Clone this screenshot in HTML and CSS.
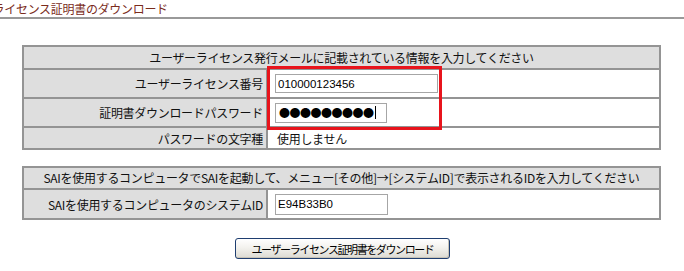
FILE: index.html
```html
<!DOCTYPE html>
<html lang="ja">
<head>
    <meta charset="UTF-8">
    <title>ユーザーライセンス証明書のダウンロード</title>
    <link rel="stylesheet" href="styles.css">
</head>
<body>
    <h1 class="page_ttl">ユーザーライセンス証明書のダウンロード</h1>

    <div class="tbl_wrap">
        <table class="form_tbl">
            <tr>
                <th colspan="2" class="head">ユーザーライセンス発行メールに記載されている情報を入力してください</th>
            </tr>
            <tr class="in_row">
                <td class="lbl">ユーザーライセンス番号</td>
                <td class="val"><input type="text" class="ent wide" value="010000123456"></td>
            </tr>
            <tr class="in_row">
                <td class="lbl">証明書ダウンロードパスワード</td>
                <td class="val">
                    <div class="ent pw"><span class="dots">●●●●●●●●●</span><span class="caret"></span></div>
                </td>
            </tr>
            <tr class="txt_row">
                <td class="lbl">パスワードの文字種</td>
                <td class="val txt">使用しません</td>
            </tr>
        </table>
        <div class="mark"></div>
    </div>

    <table class="form_tbl second">
        <tr>
            <th colspan="2" class="head">SAIを使用するコンピュータでSAIを起動して、メニュー[その他]→[システムID]で表示されるIDを入力してください</th>
        </tr>
        <tr class="in_row tall">
            <td class="lbl">SAIを使用するコンピュータのシステムID</td>
            <td class="val"><input type="text" class="ent short" value="E94B33B0"></td>
        </tr>
    </table>

    <div class="btn_row">
        <button type="button" class="subbtn">ユーザーライセンス証明書をダウンロード</button>
    </div>
</body>
</html>
```

FILE: styles.css
```css
* {
    margin: 0;
    padding: 0;
    box-sizing: border-box;
}

body {
    font-family: "Noto Sans CJK JP", "DejaVu Sans", sans-serif;
    font-size: 12px;
    color: #111;
    background: #fff;
}

.page_ttl {
    font-size: 12px;
    font-weight: normal;
    color: #7a2c1c;
    height: 19px;
    line-height: 16px;
    padding-top: 1px;
    text-indent: -54px;
    letter-spacing: -0.3px;
    border-bottom: 2px solid #999;
    white-space: nowrap;
    overflow: hidden;
}

.tbl_wrap {
    position: relative;
    width: 639px;
    margin: 26px 0 0 22px;
}

.form_tbl {
    width: 639px;
    border: 2px solid #949494;
    border-spacing: 0;
    letter-spacing: -0.3px;
}

.form_tbl.second {
    margin: 16px 0 0 22px;
}

.form_tbl tr + tr > td {
    border-top: 2px solid #949494;
}

.head {
    background: #dedede;
    font-weight: normal;
    text-align: center;
    height: 21px;
    line-height: 18px;
    padding: 0;
}

.second .head {
    height: 20px;
}

.lbl {
    width: 244px;
    background: #dedede;
    border-right: 2px solid #949494;
    text-align: right;
    padding: 0 3px 0 0;
    white-space: nowrap;
}

.val {
    background: #fff;
    padding: 0 0 0 7px;
}

.in_row > td {
    height: 29px;
}

.in_row.tall > td {
    height: 30px;
}

.txt_row > td {
    height: 22px;
}

.val.txt {
    padding-left: 9px;
}

.ent {
    display: block;
    height: 20px;
    border: 1px solid #a6a6a6;
    background: #fff;
    font-family: "Liberation Sans", sans-serif;
    font-size: 11.5px;
    color: #000;
    padding: 0 2px;
    outline: none;
}

.ent.wide {
    width: 163px;
    height: 19px;
}

.ent.short {
    width: 113px;
    height: 21px;
}

.ent.pw {
    width: 112px;
    display: flex;
    align-items: center;
    padding-left: 3px;
}

.dots {
    font-family: "Noto Sans CJK JP", sans-serif;
    font-size: 11px;
    letter-spacing: -0.5px;
    line-height: 1;
}

.caret {
    display: inline-block;
    width: 1px;
    height: 13px;
    background: #000;
    margin-left: 1px;
}

.mark {
    position: absolute;
    left: 245px;
    top: 21px;
    width: 175px;
    height: 64px;
    border: 3px solid #e8141c;
}

.btn_row {
    display: flex;
    justify-content: center;
    margin-top: 18px;
    padding-left: 1px;
}

.subbtn {
    width: 215px;
    height: 21px;
    padding: 0;
    font-family: "Noto Sans CJK JP", sans-serif;
    font-size: 11px;
    letter-spacing: -1.4px;
    color: #000;
    border: 1px solid #1f3e70;
    border-radius: 3px;
    background: linear-gradient(#ffffff, #f3f2ee 45%, #dcdad2);
    box-shadow: inset -1px -1px 0 #c8c4b8;
    cursor: pointer;
}
```
